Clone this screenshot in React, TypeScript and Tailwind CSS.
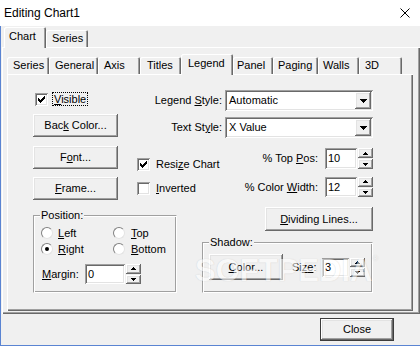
import React from "react";

const raised =
  "bg-[#f0f0f0] shadow-[inset_-1px_-1px_0_#696969,inset_1px_1px_0_#ffffff,inset_-2px_-2px_0_#a0a0a0,inset_2px_2px_0_#e3e3e3]";
const sunken =
  "bg-white shadow-[inset_1px_1px_0_#a0a0a0,inset_-1px_-1px_0_#ffffff,inset_2px_2px_0_#696969,inset_-2px_-2px_0_#e3e3e3]";
const tabUn =
  "bg-[#f0f0f0] rounded-t-[2px] shadow-[inset_1px_1px_0_#ffffff,inset_-1px_0_0_#696969,inset_-2px_0_0_#a0a0a0] h-[17px] pt-[2px] leading-[13px]";
const tabSel =
  "relative z-10 -mb-px bg-[#f0f0f0] rounded-t-[2px] shadow-[inset_1px_1px_0_#ffffff,inset_-1px_0_0_#696969,inset_-2px_0_0_#a0a0a0] h-[21px] pt-[3px] leading-[13px]";
const panel =
  "bg-[#f0f0f0] shadow-[inset_1px_1px_0_#ffffff,inset_-1px_-1px_0_#696969,inset_-2px_-2px_0_#a0a0a0]";
const group =
  "border border-[#a0a0a0] border-b-white border-r-white shadow-[inset_1px_1px_0_#ffffff,inset_-1px_-1px_0_#a0a0a0]";

function U({ c }: { c: string }) {
  return <span className="underline decoration-1 underline-offset-[1px]">{c}</span>;
}

function Btn({ className, children }: { className: string; children: React.ReactNode }) {
  return <div className={`flex items-center justify-center ${raised} ${className}`}>{children}</div>;
}

function Edit({ className, value }: { className: string; value: string }) {
  return <div className={`flex items-center pl-[3px] ${sunken} ${className}`}>{value}</div>;
}

function Arrow({ up }: { up?: boolean }) {
  return (
    <svg width="5" height="3" viewBox="0 0 5 3" shapeRendering="crispEdges">
      {up ? <path d="M2 0h1v1h1v1h1v1H0V2h1V1h1z" fill="#000" /> : <path d="M0 0h5v1H4v1H3v1H2V2H1V1H0z" fill="#000" />}
    </svg>
  );
}

function Spin({ className }: { className: string }) {
  return (
    <div className={`flex flex-col gap-px ${className}`}>
      <div className={`flex-1 flex items-center justify-center ${raised}`}>
        <Arrow up />
      </div>
      <div className={`flex-1 flex items-center justify-center ${raised}`}>
        <Arrow />
      </div>
    </div>
  );
}

function Select({ value }: { value: string }) {
  return (
    <div className={`flex items-center w-[148px] h-[21px] ${sunken}`}>
      <div className="flex-1 pl-[4px]">{value}</div>
      <div className={`w-[16px] h-[17px] m-[2px] flex items-center justify-center ${raised}`}>
        <svg width="7" height="4" viewBox="0 0 7 4" shapeRendering="crispEdges">
          <path d="M0 0h7v1H6v1H5v1H4v1H3V3H2V2H1V1H0z" fill="#000" />
        </svg>
      </div>
    </div>
  );
}

function Check({ checked }: { checked?: boolean }) {
  const ys = [5, 6, 7, 6, 5, 4, 3];
  return (
    <div className={`w-[13px] h-[13px] shrink-0 ${sunken}`}>
      {checked && (
        <svg width="13" height="13" viewBox="0 0 13 13" shapeRendering="crispEdges">
          {ys.map((y, i) => (
            <rect key={i} x={3 + i} y={y} width="1" height="3" fill="#000" />
          ))}
        </svg>
      )}
    </div>
  );
}

function Radio({ checked }: { checked?: boolean }) {
  return (
    <div className="w-[12px] h-[12px] shrink-0 rounded-full bg-white border border-t-[#808080] border-l-[#808080] border-b-[#e3e3e3] border-r-[#e3e3e3] flex items-center justify-center">
      {checked && <div className="w-[4px] h-[4px] rounded-full bg-black" />}
    </div>
  );
}

export default function App() {
  return (
    <div className="relative w-[420px] h-[346px] overflow-hidden bg-[#f0f0f0] flex flex-col font-['Liberation_Sans',Arial,sans-serif] text-[11px] leading-[13px] text-black">
      {/* title bar */}
      <div className="h-[26px] bg-white flex items-center justify-between pl-[4px] pr-[10px] shrink-0">
        <span className="text-[12px]">Editing Chart1</span>
        <svg width="10" height="10" viewBox="0 0 10 10">
          <path d="M0.5 0.5L9.5 9.5M9.5 0.5L0.5 9.5" stroke="#000" strokeWidth="1" />
        </svg>
      </div>

      <div className="flex-1 flex flex-col border-l border-b border-[#5a84d2]">
        {/* outer tabs */}
        <div className="mt-px h-[20px] flex items-end pl-[3px]">
          <div className={`w-[42px] pl-[5px] ${tabSel}`}>Chart</div>
          <div className={`w-[42px] pl-[6px] ${tabUn}`}>Series</div>
        </div>

        {/* outer panel */}
        <div className={`ml-px w-[418px] h-[267px] pl-[5px] flex flex-col ${panel}`}>
          {/* inner tabs */}
          <div className="mt-[7px] h-[20px] flex items-end">
            <div className={`w-[42px] pl-[6px] ${tabUn}`}>Series</div>
            <div className={`w-[49px] pl-[6px] ${tabUn}`}>General</div>
            <div className={`w-[42px] pl-[6px] ${tabUn}`}>Axis</div>
            <div className={`w-[41px] pl-[7px] ${tabUn}`}>Titles</div>
            <div className={`w-[52px] pl-[7px] ${tabSel}`}>Legend</div>
            <div className={`w-[40px] pl-[4px] ${tabUn}`}>Panel</div>
            <div className={`w-[45px] pl-[5px] ${tabUn}`}>Paging</div>
            <div className={`w-[41px] pl-[5px] ${tabUn}`}>Walls</div>
            <div className={`w-[43px] pl-[6px] ${tabUn}`}>3D</div>
          </div>

          {/* inner panel */}
          <div className={`w-[406px] h-[237px] pt-[16px] pl-[26px] flex flex-col ${panel}`}>
            {/* Row A */}
            <div className="h-[21px] flex items-start">
              <div className="w-[192px] h-[21px] flex justify-between items-center">
                <div className="flex items-center ml-[2px] -mt-[3px]">
                  <Check checked />
                  <span className="ml-[4px] px-px border border-dotted border-black leading-[12px]">
                    <U c="V" />
                    isible
                  </span>
                </div>
                <span className="pr-[3px]">
                  Legend <U c="S" />
                  tyle:
                </span>
              </div>
              <Select value="Automatic" />
            </div>

            {/* Row B */}
            <div className="mt-[3px] h-[24px] flex items-start">
              <Btn className="w-[85px] h-[23px]">
                <span>
                  Bac<U c="k" /> Color...
                </span>
              </Btn>
              <div className="w-[107px] h-[21px] mt-[3px] flex items-center justify-end pr-[3px]">
                <span>
                  Text St<U c="y" />
                  le:
                </span>
              </div>
              <div className="mt-[3px]">
                <Select value="X Value" />
              </div>
            </div>

            {/* Row C */}
            <div className="mt-[8px] h-[23px] flex items-start">
              <Btn className="w-[85px] h-[23px]">
                <span>
                  F<U c="o" />
                  nt...
                </span>
              </Btn>
              <div className="w-[207px] flex items-start justify-between">
                <div className="ml-[19px] mt-[12px] flex items-center">
                  <Check checked />
                  <span className="ml-[6px]">
                    Resi<U c="z" />e Chart
                  </span>
                </div>
                <div className="mt-[2px] h-[21px] pr-[7px] flex items-center">
                  <span>
                    % Top <U c="P" />
                    os:
                  </span>
                </div>
              </div>
              <Edit className="mt-[2px] w-[32px] h-[21px]" value="10" />
              <Spin className="mt-[2px] ml-px w-[15px] h-[21px]" />
            </div>

            {/* Row D */}
            <div className="mt-[8px] h-[23px] flex items-start">
              <Btn className="w-[85px] h-[23px]">
                <span>
                  <U c="F" />
                  rame...
                </span>
              </Btn>
              <div className="w-[207px] flex items-start justify-between">
                <div className="ml-[19px] mt-[5px] flex items-center">
                  <Check />
                  <span className="ml-[6px]">
                    <U c="I" />
                    nverted
                  </span>
                </div>
                <div className="h-[20px] pr-[7px] flex items-center">
                  <span>
                    % Color <U c="W" />
                    idth:
                  </span>
                </div>
              </div>
              <Edit className="w-[32px] h-[20px]" value="12" />
              <Spin className="ml-px w-[15px] h-[20px]" />
            </div>

            {/* bottom section */}
            <div className="mt-[7px] flex items-start">
              {/* Position group */}
              <div className={`mt-[8px] w-[144px] h-[78px] flex flex-col ${group}`}>
                <div className="-mt-[7px] ml-[6px] px-px w-fit bg-[#f0f0f0]">Position:</div>
                <div className="mt-[3px] h-[16px] flex items-center pl-[7px]">
                  <div className="w-[72px] flex items-center">
                    <Radio />
                    <span className="ml-[5px]">
                      <U c="L" />
                      eft
                    </span>
                  </div>
                  <div className="flex items-center">
                    <Radio />
                    <span className="ml-[6px]">
                      <U c="T" />
                      op
                    </span>
                  </div>
                </div>
                <div className="h-[16px] flex items-center pl-[7px]">
                  <div className="w-[72px] flex items-center">
                    <Radio checked />
                    <span className="ml-[5px]">
                      <U c="R" />
                      ight
                    </span>
                  </div>
                  <div className="flex items-center">
                    <Radio />
                    <span className="ml-[6px]">
                      <U c="B" />
                      ottom
                    </span>
                  </div>
                </div>
                <div className="mt-[7px] flex items-center pl-[8px]">
                  <span className="w-[43px]">
                    <U c="M" />
                    argin:
                  </span>
                  <Edit className="w-[40px] h-[20px]" value="0" />
                  <Spin className="ml-px w-[15px] h-[20px]" />
                </div>
              </div>

              {/* right column */}
              <div className="ml-[25px] w-[171px] flex flex-col items-end">
                <Btn className="w-[108px] h-[24px]">
                  <span>
                    <U c="D" />
                    ividing Lines...
                  </span>
                </Btn>
                <div className={`mt-[11px] w-[171px] h-[51px] flex flex-col ${group}`}>
                  <div className="-mt-[7px] ml-[6px] px-px w-fit bg-[#f0f0f0]">Shadow:</div>
                  <div className="mt-[5px] pl-[6px] flex items-center">
                    <Btn className="w-[74px] h-[26px]">
                      <span>
                        <U c="C" />
                        olor...
                      </span>
                    </Btn>
                    <span className="ml-[9px] w-[30px]">
                      Si<U c="z" />
                      <U c="e" />:
                    </span>
                    <Edit className="w-[27px] h-[19px]" value="3" />
                    <Spin className="ml-px w-[15px] h-[19px]" />
                  </div>
                </div>
              </div>
            </div>
          </div>
        </div>

        {/* footer */}
        <div className="flex justify-end pr-[26px] pt-[4px]">
          <div className="w-[74px] h-[23px] border border-[#3c3c3c]">
            <Btn className="w-full h-full">Close</Btn>
          </div>
        </div>
      </div>

      {/* watermark */}
      <div className="absolute left-[195px] top-[255px] flex items-start pointer-events-none select-none opacity-55">
        <span className="text-[31px] leading-none font-bold text-white [text-shadow:0_0_1px_rgba(0,0,0,0.3)]">
          SOFTPEDIA
        </span>
        <span className="text-[8px] leading-none text-white [text-shadow:0_0_1px_rgba(0,0,0,0.3)]">®</span>
      </div>
    </div>
  );
}
